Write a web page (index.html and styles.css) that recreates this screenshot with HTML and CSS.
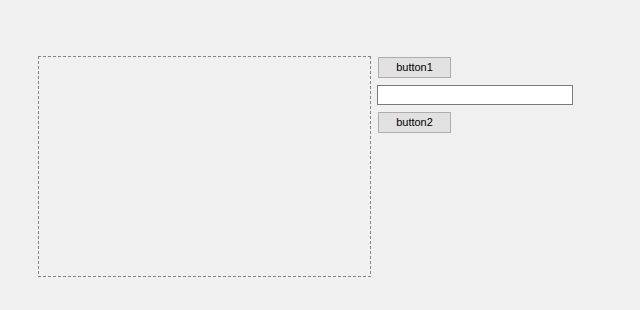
FILE: index.html
```html
<!DOCTYPE html>
<html>
<head>
<meta charset="utf-8">
<link rel="stylesheet" href="styles.css">
</head>
<body>
<div class="form">
  <div class="panel"></div>
  <div class="controls">
    <button class="btn">button1</button>
    <input class="textbox" type="text">
    <button class="btn">button2</button>
  </div>
</div>
</body>
</html>
```

FILE: styles.css
```css
html, body {
  margin: 0;
  padding: 0;
  background: #f0f0f0;
  width: 640px;
  height: 310px;
  overflow: hidden;
}
.form {
  display: flex;
  align-items: flex-start;
  padding: 56px 0 0 38px;
  gap: 7px;
}
.panel {
  width: 333px;
  height: 221px;
  box-sizing: border-box;
  background:
    repeating-linear-gradient(to right, #868686 0 3px, transparent 3px 5px) left top / 100% 1px no-repeat,
    repeating-linear-gradient(to right, #868686 0 3px, transparent 3px 5px) left bottom / 100% 1px no-repeat,
    repeating-linear-gradient(to bottom, #868686 0 3px, transparent 3px 5px) left top / 1px 100% no-repeat,
    repeating-linear-gradient(to bottom, #868686 0 3px, transparent 3px 5px) right top / 1px 100% no-repeat;
}
.controls {
  display: flex;
  flex-direction: column;
  align-items: flex-start;
  padding-top: 1px;
  gap: 7px;
}
.btn {
  width: 73px;
  height: 21px;
  margin: 0;
  padding: 0 0 1px 0;
  box-sizing: border-box;
  background: #e1e1e1;
  border: 1px solid #adadad;
  border-radius: 0;
  font-family: "Liberation Sans", Arial, sans-serif;
  font-size: 11px;
  color: #000;
  display: flex;
  align-items: center;
  justify-content: center;
}
.textbox {
  width: 196px;
  height: 20px;
  margin: 0 0 0 -1px;
  padding: 0 3px;
  box-sizing: border-box;
  background: #fff;
  border: 1px solid #7a7a7a;
  border-radius: 0;
  outline: none;
  font-family: "Liberation Sans", Arial, sans-serif;
  font-size: 11px;
}
```
